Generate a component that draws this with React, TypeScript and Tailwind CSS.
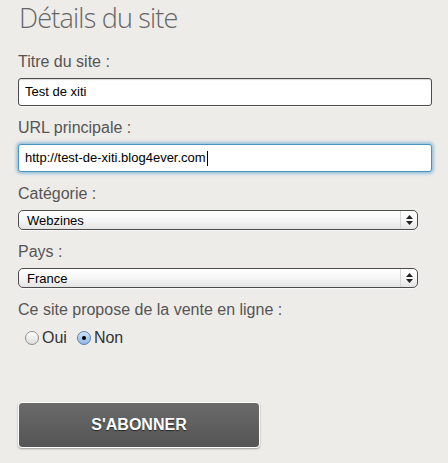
import * as React from 'react'

const LABEL =
  "block h-5 text-[16px] leading-5 text-[#555] mb-1.5 font-['Liberation_Sans',Arial,sans-serif]"

function Field({ label, children }: { label: string; children: React.ReactNode }) {
  return (
    <div className="mb-3">
      <label className={LABEL}>{label}</label>
      {children}
    </div>
  )
}

function TextBox({ value, focused }: { value: string; focused?: boolean }) {
  return (
    <div
      className={
        focused
          ? 'flex h-7 w-[414px] items-center rounded-[3px] border border-[#4a93bd] bg-white pl-[6px] shadow-[0_0_3px_2px_rgba(90,160,210,0.55)]'
          : 'flex h-7 w-[414px] items-center rounded-[3px] border border-[#4b4b4b] bg-white pl-[6px] shadow-[inset_0_1px_1px_rgba(0,0,0,0.15),0_1px_0_rgba(255,255,255,0.6)]'
      }
    >
      <span className="text-[13px] text-black">{value}</span>
      {focused && <span className="ml-px h-[15px] w-px bg-black" />}
    </div>
  )
}

function SelectBox({ value }: { value: string }) {
  return (
    <div className="flex h-5 w-[400px] items-stretch rounded-[5px] border border-[#4d4d4d] bg-gradient-to-b from-white via-[#f6f6f6] to-[#e4e4e4] shadow-[0_1px_0_rgba(255,255,255,0.7)]">
      <span className="flex flex-1 items-center pl-2 text-[13px] leading-none text-black">{value}</span>
      <span className="flex w-[17px] flex-col items-center justify-center gap-[2px] border-l border-[#d6d6d6]">
        <svg width="7" height="4" viewBox="0 0 7 4" aria-hidden="true">
          <path d="M3.5 0L7 4H0z" fill="#222" />
        </svg>
        <svg width="7" height="4" viewBox="0 0 7 4" aria-hidden="true">
          <path d="M0 0h7L3.5 4z" fill="#222" />
        </svg>
      </span>
    </div>
  )
}

function Radio({ label, checked }: { label: string; checked?: boolean }) {
  return (
    <span className="flex items-center gap-[3px]">
      <span
        className={
          checked
            ? 'flex h-[14px] w-[14px] items-center justify-center rounded-full border border-[#5a7fa8] bg-gradient-to-b from-[#cfe3f7] to-[#8fb8e6]'
            : 'h-[14px] w-[14px] rounded-full border border-[#8d8d8d] bg-gradient-to-b from-[#ffffff] to-[#dcdcdc]'
        }
      >
        {checked && <span className="h-[4px] w-[4px] rounded-full bg-black" />}
      </span>
      <span className="text-[16px] leading-5 text-[#333]">{label}</span>
    </span>
  )
}

export default function App() {
  return (
    <div className="min-h-[463px] w-[448px] bg-[#eeece9] px-[18px] pt-px font-['Liberation_Sans',Arial,sans-serif]">
      <h1 className="mb-[17px] pl-px font-['Open_Sans',sans-serif] text-[27px] font-light leading-[34px] tracking-[-0.8px] text-[#666]">
        Détails du site
      </h1>

      <Field label="Titre du site :">
        <TextBox value="Test de xiti" />
      </Field>

      <Field label="URL principale :">
        <TextBox value="http://test-de-xiti.blog4ever.com" focused />
      </Field>

      <Field label="Catégorie :">
        <SelectBox value="Webzines" />
      </Field>

      <Field label="Pays :">
        <SelectBox value="France" />
      </Field>

      <div>
        <label className={LABEL}>Ce site propose de la vente en ligne :</label>
        <div className="mt-[8px] flex items-center gap-[10px] pl-[7px]">
          <Radio label="Oui" />
          <Radio label="Non" checked />
        </div>
      </div>

      <button
        type="button"
        className="mt-[54px] flex h-[46px] w-[242px] items-center justify-center rounded-[4px] border border-white bg-gradient-to-b from-[#6a6a6a] to-[#555] text-[16px] font-bold text-white shadow-[0_1px_2px_rgba(0,0,0,0.35)] [text-shadow:0_1px_1px_rgba(0,0,0,0.6)]"
      >
        S'ABONNER
      </button>
    </div>
  )
}
